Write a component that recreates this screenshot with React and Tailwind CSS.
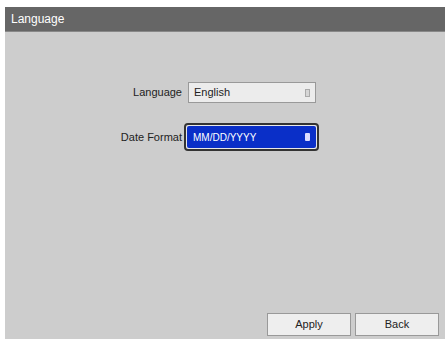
import React from 'react';

const Field = ({ label, value, focused }) => (
  <div className="flex items-center">
    <span className="w-[78px] text-right pr-[6px] text-[11px] text-[#222]">{label}</span>
    {focused ? (
      <div className="w-[135px] h-[28px] rounded-[4px] border-2 border-[#333] bg-[#e8e8e8] p-[1px] -ml-[4px]">
        <div className="flex items-center h-full bg-[#0a2fc8] rounded-[2px] px-[6px] text-[10px] text-white">
          <span className="flex-1">{value}</span>
          <span className="w-[5px] h-[8px] bg-[#dcdcff] rounded-[1px]" />
        </div>
      </div>
    ) : (
      <div className="flex items-center w-[128px] h-[21px] border border-[#999] bg-[#ececec] px-[5px] text-[11px] text-[#222]">
        <span className="flex-1">{value}</span>
        <span className="w-[5px] h-[8px] border border-[#aaa] bg-[#d6d6d6]" />
      </div>
    )}
  </div>
);

export default function App() {
  return (
    <div className="w-[448px] h-[339px] bg-white pt-[7px] pl-[5px] pr-[3px]" style={{ fontFamily: '"Liberation Sans", Arial, sans-serif' }}>
      <div className="flex flex-col h-[332px] bg-[#cdcdcd]">
        <div className="h-[25px] bg-[#666666] flex items-center px-[6px] text-[12px] text-white border-b border-[#888]">
          Language
        </div>
        <div className="flex-1 flex flex-col pt-[50px] pl-[105px] gap-[20px]">
          <Field label="Language" value="English" />
          <Field label="Date Format" value="MM/DD/YYYY" focused />
        </div>
        <div className="flex justify-end gap-[4px] pr-[6px] pb-[3px]">
          <button className="w-[84px] h-[23px] bg-[#eeeeee] border border-[#999] text-[11px] text-[#222]">Apply</button>
          <button className="w-[84px] h-[23px] bg-[#eeeeee] border border-[#999] text-[11px] text-[#222]">Back</button>
        </div>
      </div>
    </div>
  );
}
